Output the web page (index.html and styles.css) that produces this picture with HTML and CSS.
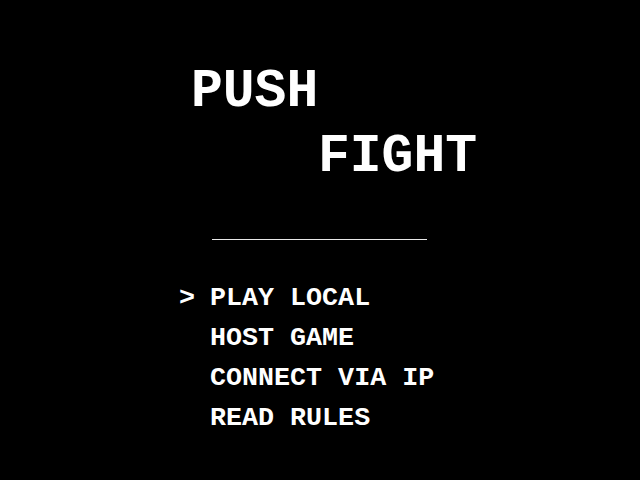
FILE: index.html
```html
<!DOCTYPE html>
<html lang="en">
<head>
    <meta charset="UTF-8">
    <meta name="viewport" content="width=device-width, initial-scale=1.0">
    <title>Push Fight</title>
    <link rel="stylesheet" href="styles.css">
</head>
<body>
    <div class="screen">
        <h1 class="title">
            <span class="title-push">PUSH</span>
            <span class="title-fight">FIGHT</span>
        </h1>
        <hr class="divider">
        <ul class="menu">
            <li class="menu-item selected"><span class="marker">&gt;</span>PLAY LOCAL</li>
            <li class="menu-item"><span class="marker"></span>HOST GAME</li>
            <li class="menu-item"><span class="marker"></span>CONNECT VIA IP</li>
            <li class="menu-item"><span class="marker"></span>READ RULES</li>
        </ul>
    </div>
</body>
</html>
```

FILE: styles.css
```css
body {
    margin: 0;
    padding: 0;
    background-color: #000;
    color: #fff;
    font-family: "Liberation Mono", "DejaVu Sans Mono", monospace;
    font-weight: bold;
    height: 480px;
    overflow: hidden;
}
.screen {
    padding-top: 60px;
    display: flex;
    flex-direction: column;
}
.title {
    margin: 0;
    font-size: 53px;
    line-height: 65px;
    font-weight: bold;
    display: flex;
    flex-direction: column;
}
.title-push {
    padding-left: 191px;
}
.title-fight {
    padding-left: 318px;
}
.divider {
    margin: 49px 0 0 212px;
    width: 215px;
    height: 1px;
    border: none;
    background-color: #e8e8e8;
}
.menu {
    list-style-type: none;
    margin: 38px 0 0 0;
    padding: 0 0 0 179px;
    font-size: 26.7px;
    line-height: 40px;
}
.menu-item {
    display: flex;
}
.marker {
    width: 31px;
}
```
